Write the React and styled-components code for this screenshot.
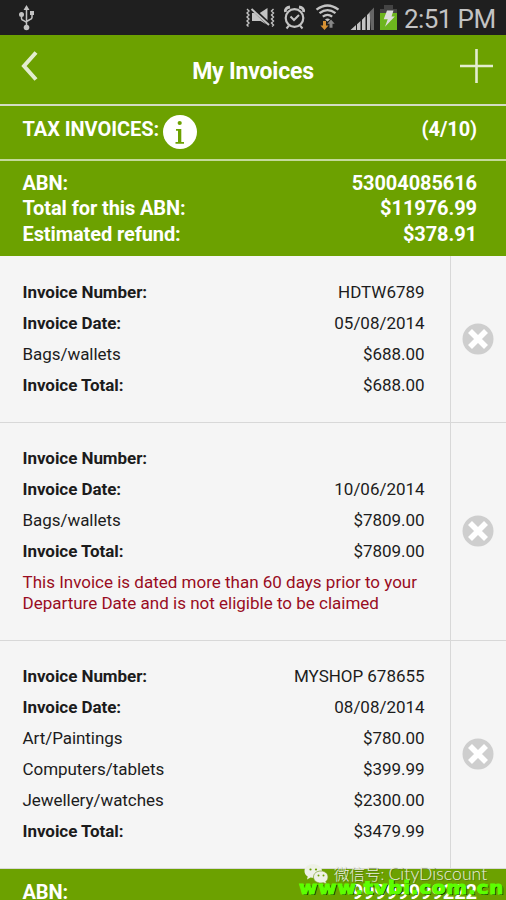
import React from 'react';
import styled, { createGlobalStyle } from 'styled-components';

const GlobalStyle = createGlobalStyle`
    * {
        box-sizing: border-box;
    }
    body {
        margin: 0;
        background: #f5f5f5;
        font-family: Roboto, "Noto Sans", sans-serif;
    }
`;

const Screen = styled.div`
    position: relative;
    width: 506px;
    height: 900px;
    overflow: hidden;
    background: #f5f5f5;
`;

const StatusBar = styled.div`
    height: 35px;
    background: #1f1f1f;
    display: flex;
    align-items: center;
    justify-content: space-between;
    padding: 0 10px 0 18px;
`;

const StatusIcons = styled.div`
    display: flex;
    align-items: center;
`;

const Clock = styled.div`
    width: 91px;
    margin-left: 6px;
    margin-right: 1px;
    padding-top: 3px;
    font-size: 26px;
    line-height: 32px;
    letter-spacing: -0.6px;
    white-space: nowrap;
    color: #c3c3c3;
`;

const Header = styled.header`
    height: 71px;
    background: #6ca100;
    border-bottom: 2px solid #d3dcc4;
    display: flex;
    justify-content: space-between;
    padding: 13px 12px 0 20px;
`;

const Title = styled.div`
    padding: 10px 8px 0 0;
    font-size: 23px;
    line-height: 27px;
    letter-spacing: -0.2px;
    font-weight: 700;
    color: #fff;
`;

const IconButton = styled.button`
    border: 0;
    padding: 0;
    background: none;
    width: 36px;
    height: 36px;
    display: flex;
    justify-content: ${({ $align }) => $align};
`;

const TaxBar = styled.div`
    height: 55px;
    background: #6ca100;
    border-bottom: 2px solid #c4d99a;
    display: flex;
    justify-content: space-between;
    padding: 9px 29px 0 22.5px;
    color: #fff;
    font-size: 20px;
    line-height: 28px;
    font-weight: 700;
`;

const TaxLabel = styled.div`
    display: flex;
    gap: 4px;
    letter-spacing: -0.05px;
`;

const Summary = styled.div`
    height: 95px;
    background: #6ca100;
    padding: ${({ $top }) => $top}px 29px 0 22.5px;
    color: #fff;
    font-size: 20px;
    line-height: 25.3px;
    letter-spacing: -0.1px;
    font-weight: 700;
`;

const SummaryRow = styled.div`
    display: flex;
    justify-content: space-between;
`;

const SummaryValue = styled.span`
    letter-spacing: -0.08px;
`;

const Invoice = styled.div`
    height: ${({ $height }) => $height}px;
    border-bottom: 1px solid #d8d8d8;
    display: flex;
`;

const Details = styled.div`
    width: 451px;
    border-right: 1px solid #d8d8d8;
    padding: ${({ $top }) => $top}px 25.5px 0 22.5px;
    color: #1c1c1c;
    font-size: 17px;
`;

const Line = styled.div`
    display: flex;
    justify-content: space-between;
    line-height: 31px;
`;

const Label = styled.span`
    font-weight: ${({ $bold }) => ($bold ? 700 : 400)};
    letter-spacing: -0.05px;
`;

const Value = styled.span`
    letter-spacing: -0.03px;
`;

const Warning = styled.div`
    padding-top: 5px;
    line-height: 21px;
    white-space: nowrap;
    color: #990c22;
`;

const Remove = styled.div`
    flex: 1;
    display: flex;
    align-items: center;
    justify-content: center;
    padding: 0 2px 1px 0;
`;

const WeChatMark = styled.div`
    position: absolute;
    left: 304px;
    top: 862px;
    display: flex;
    gap: 5px;
    font-family: Lato, "Noto Sans CJK SC", sans-serif;
    font-weight: 300;
    font-size: 15.5px;
    line-height: 24px;
    white-space: nowrap;
    color: #e9eee0;
    text-shadow: 1px 1px 0 rgba(70, 90, 30, 0.5);

    svg {
        margin-top: 2px;
    }
`;

const AccountName = styled.span`
    font-size: 17.5px;
    letter-spacing: 0.1px;
`;

const SiteMark = styled.div`
    position: absolute;
    left: 299px;
    top: 878px;
    font-family: "DejaVu Sans", sans-serif;
    font-weight: 700;
    font-size: 17px;
    line-height: 20px;
    letter-spacing: 0.8px;
    white-space: nowrap;
    color: #5cff00;
    transform: scaleX(1.165);
    transform-origin: left;
    -webkit-text-stroke: 1px #5cff00;
    text-shadow: 1px 1px 0 #102800;
`;

const abns = [
    { abn: '53004085616', total: '$11976.99', refund: '$378.91' },
    { abn: '99999999222' },
];

const invoices = [
    {
        height: 167,
        top: 21,
        number: 'HDTW6789',
        date: '05/08/2014',
        items: [['Bags/wallets', '$688.00']],
        total: '$688.00',
    },
    {
        height: 218,
        top: 20,
        number: '',
        date: '10/06/2014',
        items: [['Bags/wallets', '$7809.00']],
        total: '$7809.00',
        warning: ['This Invoice is dated more than 60 days prior to your', 'Departure Date and is not eligible to be claimed'],
    },
    {
        height: 228,
        top: 20,
        number: 'MYSHOP 678655',
        date: '08/08/2014',
        items: [
            ['Art/Paintings', '$780.00'],
            ['Computers/tablets', '$399.99'],
            ['Jewellery/watches', '$2300.00'],
        ],
        total: '$3479.99',
    },
];

const UsbIcon = () => (
    <svg width="18" height="26" viewBox="0 0 18 26" fill="none" stroke="#c3c3c3" strokeWidth="1.5">
        <path d="M8.5 3v20M3.5 10v3.5q0 1.5 2 2l3 2M14 9v3.5q0 1.5-2 2l-3.5 2" />
        <path d="M8.5 0l3 5h-6zM12 6h4v4h-4z" fill="#c3c3c3" stroke="none" />
        <circle cx="3.5" cy="9.5" r="2.5" fill="#c3c3c3" stroke="none" />
        <circle cx="8.5" cy="22.5" r="2.8" fill="#c3c3c3" stroke="none" />
    </svg>
);

// muted, alarm, wifi, signal and battery share one strip
const SystemIcons = () => (
    <svg width="152" height="35" viewBox="246 0 152 35" fill="none">
        <path d="M247 9l2 2-2 2 2 2-2 2 2 2-2 2 2 2-2 2 1.5 1.5M273.500 9l-2 2 2 2-2 2 2 2-2 2 2 2-2 2 2 2-1.5 1.5" stroke="#c3c3c3" strokeWidth="1.4" />
        <path d="M259 13.500l8.500-5.500v14z" fill="#c3c3c3" />
        <path d="M253 8l16.500 15.500" stroke="#1f1f1f" strokeWidth="2" />
        <path d="M251.500 9l17.500 16" stroke="#c3c3c3" strokeWidth="2" />
        <path d="M252 13h2.500l12 11.500-6-3.500H252z" fill="#c3c3c3" />
        <g stroke="#c3c3c3">
            <circle cx="294.500" cy="18" r="8.800" strokeWidth="2.2" />
            <path d="M290.500 16.500l3.500 3.500 5-5" strokeWidth="2" />
            <path d="M285.500 12q-1-4 4.500-5M303.500 12q1-4-4.500-5" strokeWidth="2.8" />
            <path d="M289 25.500l-2.500 3M300 25.500l2.500 3" strokeWidth="2" />
        </g>
        <g stroke="#c3c3c3" strokeWidth="2.3">
            <path d="M316.500 9.700q11-8.500 22 0M319.500 13.200q8-6.200 16 0M322.800 16.700q4.700-3.600 9.400 0" />
        </g>
        <path d="M325 19.500q2.500-1.800 5 0l-2.500 2z" fill="#c3c3c3" />
        <path d="M323 21h3v4.500h2.500L324.500 30l-4-4.500h2.500z" fill="#d59033" />
        <path d="M331 19.500l3.700 4.300h-2.200v4h-3v-4h-2.200z" fill="#888" />
        <g fill="#c3c3c3">
            <path d="M350.500 30l5.500-5v5zM357 24.200l3.500-3.200v9H357zM362 19.700l3.500-3.400V30H362zM367 15l3-3v18h-3z" />
            <path d="M369.500 12l4.500-4.500V30h-3z" fill="#666" />
        </g>
        <path d="M380 9h4V5h9v4h4v4h-17z" fill="#444" />
        <path d="M380 13h17v17h-17z" fill="#6db51e" />
        <path d="M387 10.500h6.500l-2 6h3.300L385 26.700l2.700-7.500h-4z" fill="#ddd" />
    </svg>
);

const InfoIcon = () => (
    <svg width="34" height="34" viewBox="0 0 34 34">
        <circle cx="17" cy="17" r="17" fill="#fff" />
        <circle cx="16.7" cy="8" r="2.1" fill="#6ca100" />
        <path d="M13 14h5.300v13H21v1.800h-8.500V27H15V15.800h-2z" fill="#6ca100" />
    </svg>
);

const RemoveIcon = () => (
    <svg width="32" height="32" viewBox="0 0 32 32">
        <circle cx="16" cy="16" r="15.5" fill="#cecece" />
        <path d="M8 8l16 16M24 8L8 24" stroke="#fff" strokeWidth="5.6" />
    </svg>
);

const WeChatIcon = () => (
    <svg width="25" height="22" viewBox="0 0 25 22">
        <path d="M9 0C4 0 .5 3 .5 7c0 2.500 1.200 4.300 3.200 5.600L3 15.500l3.500-2 3.500.5c5 0 8-3.200 8-7S14 0 9 0z" fill="#eef1e6" />
        <path d="M17 7c-4.500 0-7.500 2.600-7.500 6s3 6 7.500 6l2.500-.3 3 1.300-.7-2.500c1.500-1.200 2.200-2.700 2.200-4.500 0-3.400-3-6-7-6z" fill="#eef1e6" stroke="#7ca126" strokeWidth="0.7" />
        <g fill="#6ca100">
            <circle cx="6.5" cy="5.5" r="1.1" />
            <circle cx="12" cy="5.5" r="1.1" />
            <circle cx="14.5" cy="11.5" r="1" />
            <circle cx="19.5" cy="11.5" r="1" />
        </g>
    </svg>
);

function InvoiceRow({ invoice }) {
    return (
        <Invoice $height={invoice.height}>
            <Details $top={invoice.top}>
                <Line><Label $bold>Invoice Number:</Label><Value>{invoice.number}</Value></Line>
                <Line><Label $bold>Invoice Date:</Label><Value>{invoice.date}</Value></Line>
                {invoice.items.map(([name, price]) => (
                    <Line key={name}><Label>{name}</Label><Value>{price}</Value></Line>
                ))}
                <Line><Label $bold>Invoice Total:</Label><Value>{invoice.total}</Value></Line>
                {invoice.warning && (
                    <Warning>
                        {invoice.warning.map(text => <div key={text}>{text}</div>)}
                    </Warning>
                )}
            </Details>
            <Remove>
                <RemoveIcon />
            </Remove>
        </Invoice>
    );
}

function AbnSummary({ data, top }) {
    return (
        <Summary $top={top}>
            <SummaryRow><span>ABN:</span><SummaryValue>{data.abn}</SummaryValue></SummaryRow>
            {data.total && <SummaryRow><span>Total for this ABN:</span><SummaryValue>{data.total}</SummaryValue></SummaryRow>}
            {data.refund && <SummaryRow><span>Estimated refund:</span><SummaryValue>{data.refund}</SummaryValue></SummaryRow>}
        </Summary>
    );
}

export default function App() {
    return (
        <Screen>
            <GlobalStyle />
            <StatusBar>
                <UsbIcon />
                <StatusIcons>
                    <SystemIcons />
                    <Clock>2:51 PM</Clock>
                </StatusIcons>
            </StatusBar>
            <Header>
                <IconButton $align="flex-start">
                    <svg width="20" height="36" viewBox="0 0 20 36" fill="none">
                        <path d="M16 4.500L4 18l12 13.500" stroke="#e3edcf" strokeWidth="4" />
                    </svg>
                </IconButton>
                <Title>My Invoices</Title>
                <IconButton $align="flex-end">
                    <svg width="36" height="36" viewBox="0 0 36 36">
                        <path d="M18.500 1v34M2 18h33" stroke="#e3edcf" strokeWidth="2.6" />
                    </svg>
                </IconButton>
            </Header>
            <TaxBar>
                <TaxLabel><span>TAX INVOICES:</span><InfoIcon /></TaxLabel>
                <SummaryValue>(4/10)</SummaryValue>
            </TaxBar>
            <AbnSummary data={abns[0]} top={10} />
            {invoices.map(invoice => <InvoiceRow key={invoice.total} invoice={invoice} />)}
            <AbnSummary data={abns[1]} top={10.5} />
            <WeChatMark>
                <WeChatIcon />
                <span>微信号: <AccountName>CityDiscount</AccountName></span>
            </WeChatMark>
            <SiteMark>www.tvbi.com.cn</SiteMark>
        </Screen>
    );
}
